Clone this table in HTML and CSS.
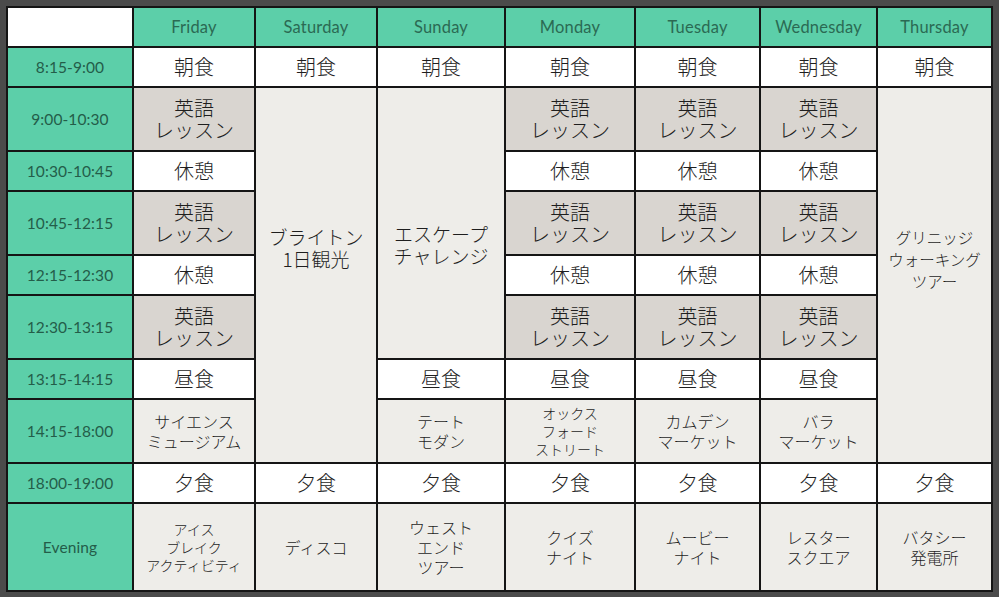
FILE: index.html
```html
<!DOCTYPE html>
<html lang="ja">
<head>
<meta charset="utf-8">
<title>Timetable</title>
<link rel="stylesheet" href="styles.css">
</head>
<body>
<div class="frame">
<table class="tt">
  <colgroup>
    <col class="c-time"><col class="c-fri"><col class="c-sat"><col class="c-sun"><col class="c-mon"><col class="c-tue"><col class="c-wed"><col class="c-thu">
  </colgroup>
  <thead>
    <tr class="r-head">
      <th class="corner"></th>
      <th>Friday</th><th>Saturday</th><th>Sunday</th><th>Monday</th><th>Tuesday</th><th>Wednesday</th><th>Thursday</th>
    </tr>
  </thead>
  <tbody>
    <tr class="r-s">
      <th class="time">8:15-9:00</th>
      <td class="meal">朝食</td><td class="meal">朝食</td><td class="meal">朝食</td><td class="meal">朝食</td><td class="meal">朝食</td><td class="meal">朝食</td><td class="meal">朝食</td>
    </tr>
    <tr class="r-l">
      <th class="time">9:00-10:30</th>
      <td class="lesson">英語<br>レッスン</td>
      <td class="trip sat" rowspan="7">ブライトン<br>1日観光</td>
      <td class="trip sun" rowspan="5">エスケープ<br>チャレンジ</td>
      <td class="lesson">英語<br>レッスン</td>
      <td class="lesson">英語<br>レッスン</td>
      <td class="lesson">英語<br>レッスン</td>
      <td class="trip thu" rowspan="7">グリニッジ<br>ウォーキング<br>ツアー</td>
    </tr>
    <tr class="r-s">
      <th class="time">10:30-10:45</th>
      <td class="meal">休憩</td><td class="meal">休憩</td><td class="meal">休憩</td><td class="meal">休憩</td>
    </tr>
    <tr class="r-l">
      <th class="time">10:45-12:15</th>
      <td class="lesson">英語<br>レッスン</td><td class="lesson">英語<br>レッスン</td><td class="lesson">英語<br>レッスン</td><td class="lesson">英語<br>レッスン</td>
    </tr>
    <tr class="r-s">
      <th class="time">12:15-12:30</th>
      <td class="meal">休憩</td><td class="meal">休憩</td><td class="meal">休憩</td><td class="meal">休憩</td>
    </tr>
    <tr class="r-l">
      <th class="time">12:30-13:15</th>
      <td class="lesson">英語<br>レッスン</td><td class="lesson">英語<br>レッスン</td><td class="lesson">英語<br>レッスン</td><td class="lesson">英語<br>レッスン</td>
    </tr>
    <tr class="r-s">
      <th class="time">13:15-14:15</th>
      <td class="meal">昼食</td><td class="meal">昼食</td><td class="meal">昼食</td><td class="meal">昼食</td><td class="meal">昼食</td>
    </tr>
    <tr class="r-l">
      <th class="time">14:15-18:00</th>
      <td class="act">サイエンス<br>ミュージアム</td>
      <td class="act">テート<br>モダン</td>
      <td class="act small">オックス<br>フォード<br>ストリート</td>
      <td class="act">カムデン<br>マーケット</td>
      <td class="act">バラ<br>マーケット</td>
    </tr>
    <tr class="r-s">
      <th class="time">18:00-19:00</th>
      <td class="meal">夕食</td><td class="meal">夕食</td><td class="meal">夕食</td><td class="meal">夕食</td><td class="meal">夕食</td><td class="meal">夕食</td><td class="meal">夕食</td>
    </tr>
    <tr class="r-e">
      <th class="time">Evening</th>
      <td class="act small">アイス<br>ブレイク<br>アクティビティ</td>
      <td class="act">ディスコ</td>
      <td class="act">ウェスト<br>エンド<br>ツアー</td>
      <td class="act">クイズ<br>ナイト</td>
      <td class="act">ムービー<br>ナイト</td>
      <td class="act">レスター<br>スクエア</td>
      <td class="act">バタシー<br>発電所</td>
    </tr>
  </tbody>
</table>
</div>
</body>
</html>
```

FILE: styles.css
```css
html, body {
  margin: 0;
  padding: 0;
  background: #4b4b4b;
}

.frame {
  padding: 6px 0 0 6px;
}

.tt {
  border-collapse: collapse;
  table-layout: fixed;
  width: 987px;
  font-family: "Noto Sans CJK JP", "Noto Sans", sans-serif;
  font-weight: 300;
  color: #1e1e1e;
}

.tt th, .tt td {
  border: 2px solid #151515;
  padding: 0;
  text-align: center;
  vertical-align: middle;
  overflow: hidden;
}

.c-time { width: 126px; }
.c-fri { width: 122px; }
.c-sat { width: 122px; }
.c-sun { width: 128px; }
.c-mon { width: 130px; }
.c-tue { width: 125px; }
.c-wed { width: 117px; }
.c-thu { width: 115px; }

.r-head { height: 40px; }
.r-s { height: 40px; }
.r-l { height: 64px; }
.r-e { height: 88px; }

.tt thead th {
  background: #5ccfa9;
  color: #2b6a53;
  font-family: "Lato", "Liberation Sans", sans-serif;
  font-weight: 400;
  font-size: 16.5px;
  letter-spacing: 0.2px;
}

.tt thead th.corner {
  background: #fff;
}

.time {
  background: #5ccfa9;
  color: #245d49;
  font-family: "Lato", "Liberation Sans", sans-serif;
  font-weight: 400;
  font-size: 15.5px;
  letter-spacing: 0.1px;
}

.meal {
  background: #fff;
  font-size: 20px;
  line-height: 22px;
}

.lesson {
  background: #d9d5d0;
  font-size: 20px;
  line-height: 22px;
}

.trip {
  background: #eeede9;
  font-size: 19px;
  line-height: 22px;
}

.trip.sat { padding-bottom: 54px; }
.trip.sun { padding-top: 44px; }
.trip.thu { padding-bottom: 32px; font-size: 15.5px; }

.act {
  background: #eeede9;
  font-size: 16px;
  line-height: 20px;
}

.act.small {
  font-size: 14px;
  line-height: 18px;
}
```
